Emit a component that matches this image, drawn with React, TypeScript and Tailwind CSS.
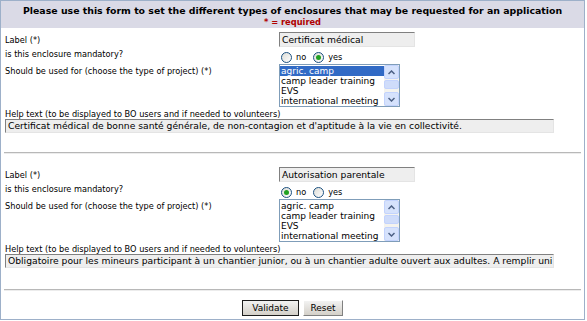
import React from "react";

const items = ["agric. camp", "camp leader training", "EVS", "international meeting"];

function Radio({ checked }: { checked: boolean }) {
  return (
    <span className="inline-flex h-[11px] w-[11px] items-center justify-center rounded-full border border-[#1c5180] bg-gradient-to-br from-[#dcdcd6] to-white">
      {checked && <span className="h-[5px] w-[5px] rounded-full bg-[#21a121]" />}
    </span>
  );
}

function Chevron({ up }: { up: boolean }) {
  return (
    <svg width="7" height="5" viewBox="0 0 7 5">
      <path d={up ? "M0.5 4 L3.5 1 L6.5 4" : "M0.5 1 L3.5 4 L6.5 1"} fill="none" stroke="#4d6185" strokeWidth="1.5" />
    </svg>
  );
}

function ListBox({ selected }: { selected: boolean }) {
  return (
    <div className="flex h-[43px] w-[121px] border border-[#7f9db9] bg-white text-[9px]">
      <div className="flex flex-1 flex-col overflow-hidden whitespace-nowrap pt-[1px] leading-[10px]">
        {items.map((it, i) => (
          <div
            key={it}
            className={
              "h-[10px] pl-[1px] " + (selected && i === 0 ? "bg-[#316ac5] text-white" : "text-black")
            }
          >
            {it}
          </div>
        ))}
      </div>
      <div className="flex w-[15px] flex-col bg-[#f4f3ee]">
        <div className="flex h-[14px] items-center justify-center rounded-[2px] border border-[#c3d3fd] bg-[#d6e2fc]">
          <Chevron up />
        </div>
        <div className="mt-[1px] h-[9px] rounded-[2px] border border-[#c3d3fd] bg-[#cfdcfa]" />
        <div className="flex-1" />
        <div className="flex h-[14px] items-center justify-center rounded-[2px] border border-[#c3d3fd] bg-[#d6e2fc]">
          <Chevron up={false} />
        </div>
      </div>
    </div>
  );
}

function Section({
  label,
  yes,
  selected,
  help,
}: {
  label: string;
  yes: boolean;
  selected: boolean;
  help: string;
}) {
  return (
    <div className="flex flex-col">
      <div className="grid grid-cols-[278px_1fr]">
        <div className="flex h-[15px] items-center pl-[4px]">Label (*)</div>
        <div>
          <div className="flex h-[15px] w-[136px] items-center border border-t-[#808080] border-l-[#808080] border-r-[#e4e4e4] border-b-[#e4e4e4] bg-[#eeeeee] pl-[2px] text-[9.2px]">
            {label}
          </div>
        </div>
        <div className="h-[17px] pl-[4px] pt-[2px]">is this enclosure mandatory?</div>
        <div className="flex h-[17px] items-center gap-[4px] pl-[2px] pt-[3px]">
          <Radio checked={!yes} />
          <span className="mr-[3px]">no</span>
          <Radio checked={yes} />
          <span>yes</span>
        </div>
        <div className="pl-[4px] pt-[2px]">Should be used for (choose the type of project) (*)</div>
        <ListBox selected={selected} />
      </div>
      <div className="h-[12px] pl-[4px] pt-[2px] leading-[10px]">Help text (to be displayed to BO users and if needed to volunteers)</div>
      <div className="ml-[4px] flex h-[14px] w-[549px] items-center overflow-hidden whitespace-nowrap border border-t-[#808080] border-l-[#808080] border-r-[#e4e4e4] border-b-[#e4e4e4] bg-[#eeeeee] pl-[2px] text-[9.2px]">
        {help}
      </div>
    </div>
  );
}

export default function App() {
  return (
    <div className="h-[321px] w-[587px] bg-white font-['DejaVu_Sans',sans-serif] text-[8.2px] leading-[10px] text-black">
      <div className="flex h-[320px] w-[585px] flex-col border border-[#9db0c9]">
        <div className="flex h-[27px] flex-col items-center bg-[#dadae6] pt-[4px]">
          <div className="text-[9.4px] font-bold leading-[12px]">
            Please use this form to set the different types of enclosures that may be requested for an application
          </div>
          <div className="text-[8.3px] font-bold leading-[10px] text-[#b00000]">* = required</div>
        </div>
        <div className="pt-[4px]">
          <Section
            label="Certificat médical"
            yes={true}
            selected={true}
            help="Certificat médical de bonne santé générale, de non-contagion et d'aptitude à la vie en collectivité."
          />
        </div>
        <div className="mx-[3px] mt-[19px] h-[2px] border-t border-t-[#b8b8b8] border-b border-b-[#ececec]" />
        <div className="pt-[13px]">
          <Section
            label="Autorisation parentale"
            yes={false}
            selected={false}
            help="Obligatoire pour les mineurs participant à un chantier junior, ou à un chantier adulte ouvert aux adultes. A remplir uni"
          />
        </div>
        <div className="mx-[3px] mt-[21px] h-[2px] border-t border-t-[#b8b8b8] border-b border-b-[#ececec]" />
        <div className="flex justify-center gap-[4px] pt-[9px]">
          <button className="h-[16px] w-[57px] border border-[#1c1c1c] bg-gradient-to-b from-[#f2f2f2] to-[#d4d0c8] text-[9px] leading-[14px]">
            Validate
          </button>
          <button className="h-[16px] w-[40px] border border-t-[#ffffff] border-l-[#ffffff] border-r-[#808080] border-b-[#808080] bg-gradient-to-b from-[#f2f2f2] to-[#d4d0c8] text-[9px] leading-[14px]">
            Reset
          </button>
        </div>
      </div>
    </div>
  );
}
